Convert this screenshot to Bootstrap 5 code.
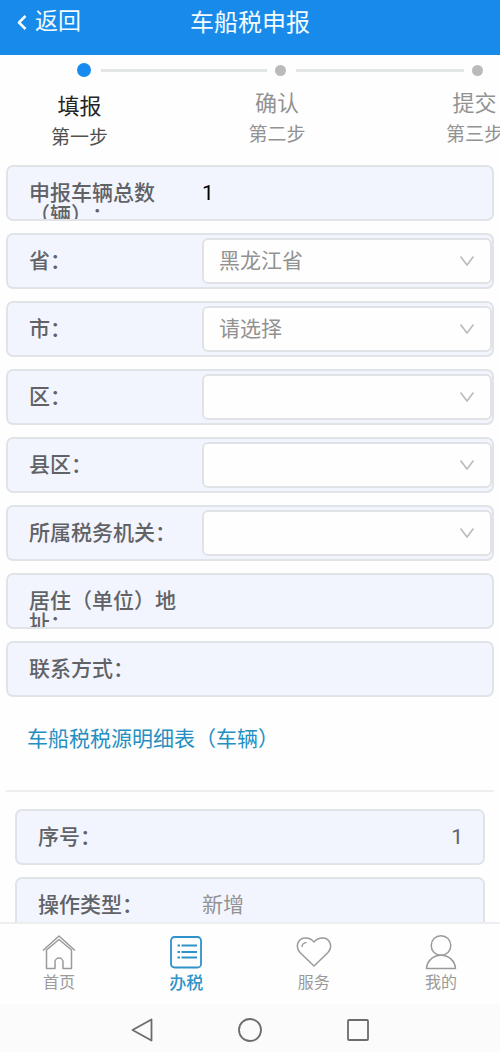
<!DOCTYPE html>
<html lang="zh-CN">
<head>
<meta charset="utf-8">
<meta name="viewport" content="width=device-width, initial-scale=1">
<title>车船税申报</title>
<link href="https://cdn.jsdelivr.net/npm/bootstrap@5.3.0/dist/css/bootstrap.min.css" rel="stylesheet">
<style>
  body { font-family: Roboto, "Noto Sans CJK SC", sans-serif; font-size: 21px; line-height: 22px; color: #606266; background: #fefefe; text-spacing-trim: space-all; }
  .app-header { background: #188bea; color: #f2fbff; height: 55px; display: grid; grid-template-columns: 1fr auto 1fr; }
  .back-btn { color: inherit; font-size: 23px; line-height: 44px; padding-left: 16px; }
  .title-text { font-size: 24px; line-height: 46px; font-weight: 400; }

  .steps { padding: 8px 0 0 51px; height: 110px; }
  .step { flex: 0 0 44%; color: #929292; }
  .rail { height: 14px; margin-left: 26px; width: 100%; }
  .dot { width: 11px; height: 11px; background: #b9bbbb; }
  .rail-line { height: 3px; background: #e3e6e6; margin: 0 8px 0 10px; }
  .step-label { font-size: 22px; line-height: 32px; margin-top: 11px; }
  .step-sub { font-size: 19px; line-height: 30px; }
  .step.current { color: #262626; }
  .current .step-label { margin-top: 14px; }
  .current .dot { width: 14px; height: 14px; background: #188bf0; }
  .current .step-sub { color: #505050; }

  .app-form { padding: 0 6px; }
  .form-rows { gap: 12px; }
  .field { height: 56px; border: 2px solid #e0e3e8; border-radius: 7px; background: #f2f5fe; padding-left: 21px; }
  .field-label { flex: 0 0 173px; padding: 15px 12px 0 0; font-weight: 500; }
  .field-value { padding-top: 15px; }
  .field .form-select { align-self: center; height: 46px; font-size: 21px; line-height: 22px; padding: 0 40px 0 15px; color: #929292; border: 2px solid #e0e3e5; border-radius: 6px; background-color: #fefefe; background-position: right 15px center; background-size: 16px 12px;
    --bs-form-select-bg-img: url("data:image/svg+xml,%3csvg xmlns='http://www.w3.org/2000/svg' viewBox='0 0 16 12'%3e%3cpath fill='none' stroke='%23b8b8b8' stroke-width='1.5' d='M1.5 1.5 8 10l6.500-8.500'/%3e%3c/svg%3e"); }
  .detail-title { font-size: 21px; line-height: 30px; font-weight: 400; color: #268fc2; padding: 27px 21px 36px; border-bottom: 2px solid #edeeef; margin-bottom: 17px; }
  .detail-rows { padding: 0 9px; }
  .detail-rows .field-label { flex-basis: 164px; }
  .detail-rows .field-value { color: #929292; }
  .detail-rows .row-number { color: #606266; padding-right: 20px; }

  .tab-bar { border-top: 2px solid #eceef0; height: 82px; padding: 10px 27px 0; }
  .tab-item { width: 64px; font-size: 16px; line-height: 26px; color: #9a9a9a; }
  .tab-item svg { width: 36px; height: 36px; }
  .tab-item.current { color: #2f92c8; font-weight: 500; font-size: 17px; }
  .system-bar { height: 48px; padding-top: 4px; gap: 84px; background: #fbfbfb; color: #6c6c6c; }
  svg { fill: none; stroke: currentColor; stroke-width: 1.5; stroke-linejoin: round; }
</style>
</head>
<body class="vh-100 d-flex flex-column overflow-hidden">

<header class="app-header flex-shrink-0">
  <button type="button" class="back-btn btn border-0 py-0 pe-0 d-flex align-items-center align-self-start">
    <svg width="11" height="18" viewBox="0 0 11 18" aria-hidden="true"><path stroke-width="2.500" d="M9.500 3 3 9.500l6.500 6.500"/></svg>
    <span class="ps-2">返回</span>
  </button>
  <h1 class="title-text m-0">车船税申报</h1>
</header>

<main class="flex-grow-1 overflow-hidden">
  <ol class="steps list-unstyled d-flex m-0 overflow-hidden">
    <li class="step current">
      <div class="rail d-flex align-items-center"><span class="dot rounded-circle"></span><span class="rail-line flex-grow-1"></span></div>
      <div class="d-inline-block text-center"><div class="step-label">填报</div><div class="step-sub">第一步</div></div>
    </li>
    <li class="step">
      <div class="rail d-flex align-items-center"><span class="dot rounded-circle"></span><span class="rail-line flex-grow-1"></span></div>
      <div class="d-inline-block text-center"><div class="step-label">确认</div><div class="step-sub">第二步</div></div>
    </li>
    <li class="step">
      <div class="rail d-flex align-items-center"><span class="dot rounded-circle"></span></div>
      <div class="d-inline-block text-center"><div class="step-label">提交</div><div class="step-sub">第三步</div></div>
    </li>
  </ol>

  <form class="app-form">
    <div class="form-rows d-flex flex-column">
      <div class="field d-flex overflow-hidden"><span class="field-label">申报车辆总数（辆）：</span><span class="field-value text-black">1</span></div>
      <div class="field d-flex"><label class="field-label" for="province">省：</label><select class="form-select" id="province"><option>黑龙江省</option></select></div>
      <div class="field d-flex"><label class="field-label" for="city">市：</label><select class="form-select" id="city"><option>请选择</option></select></div>
      <div class="field d-flex"><label class="field-label" for="district">区：</label><select class="form-select" id="district"><option></option></select></div>
      <div class="field d-flex"><label class="field-label" for="county">县区：</label><select class="form-select" id="county"><option></option></select></div>
      <div class="field d-flex"><label class="field-label" for="office">所属税务机关：</label><select class="form-select" id="office"><option></option></select></div>
      <div class="field d-flex overflow-hidden"><label class="field-label" for="address">居住（单位）地址：</label><input class="form-control border-0 bg-transparent" id="address"></div>
      <div class="field d-flex"><label class="field-label" for="phone">联系方式：</label><input class="form-control border-0 bg-transparent" id="phone"></div>
    </div>

    <h2 class="detail-title mt-0">车船税税源明细表（车辆）</h2>
    <div class="form-rows detail-rows d-flex flex-column">
      <div class="field d-flex justify-content-between"><span class="field-label">序号：</span><span class="field-value row-number">1</span></div>
      <div class="field d-flex"><span class="field-label">操作类型：</span><span class="field-value">新增</span></div>
    </div>
  </form>
</main>

<nav class="tab-bar d-flex justify-content-between flex-shrink-0">
  <a href="#" class="tab-item d-flex flex-column align-items-center text-decoration-none">
    <svg viewBox="0 0 36 36"><path d="M2 16.500 18 2l16 14.500M5.500 16v18.500H14V28a4 4 0 0 1 8 0v6.500h8.500V16L18 5.500z"/></svg>首页</a>
  <a href="#" class="tab-item current d-flex flex-column align-items-center text-decoration-none" aria-current="page">
    <svg viewBox="0 0 36 36"><rect x="3" y="3" width="30" height="30.500" rx="3.500" stroke-width="1.800"/><path stroke-width="1.800" d="M9.500 11.500H12m1.500 0H29M9.500 18H12m1.500 0H29M9.500 23.500H12m1.500 0H29"/></svg>办税</a>
  <a href="#" class="tab-item d-flex flex-column align-items-center text-decoration-none">
    <svg viewBox="0 0 36 36"><path d="M18 32 4 18.500C-1 13 1.500 4 9.500 4 13 4 16 5.500 18 8c2-2.500 5-4 8.500-4 8 0 10.500 9 5.500 14.500zM6 13c0-2.500 2-4.500 4.500-4.500"/></svg>服务</a>
  <a href="#" class="tab-item d-flex flex-column align-items-center text-decoration-none">
    <svg viewBox="0 0 36 36"><circle cx="18" cy="11.500" r="9.800"/><path d="M3.500 34.500C4 27 10 21.300 18 21.300S32 27 32.500 34.500z"/></svg>我的</a>
</nav>

<div class="system-bar d-flex justify-content-center align-items-center flex-shrink-0">
  <svg width="24" height="24" viewBox="0 0 24 24"><path stroke-width="1.800" d="M21.500 1.500v21L2.500 12z"/></svg>
  <svg width="24" height="24" viewBox="0 0 24 24"><circle cx="12" cy="12" r="11" stroke-width="1.800"/></svg>
  <svg width="24" height="24" viewBox="0 0 24 24"><rect x="2" y="2" width="20" height="20" rx="1" stroke-width="1.800"/></svg>
</div>

<script src="https://cdn.jsdelivr.net/npm/bootstrap@5.3.0/dist/js/bootstrap.bundle.min.js"></script>
</body>
</html>
